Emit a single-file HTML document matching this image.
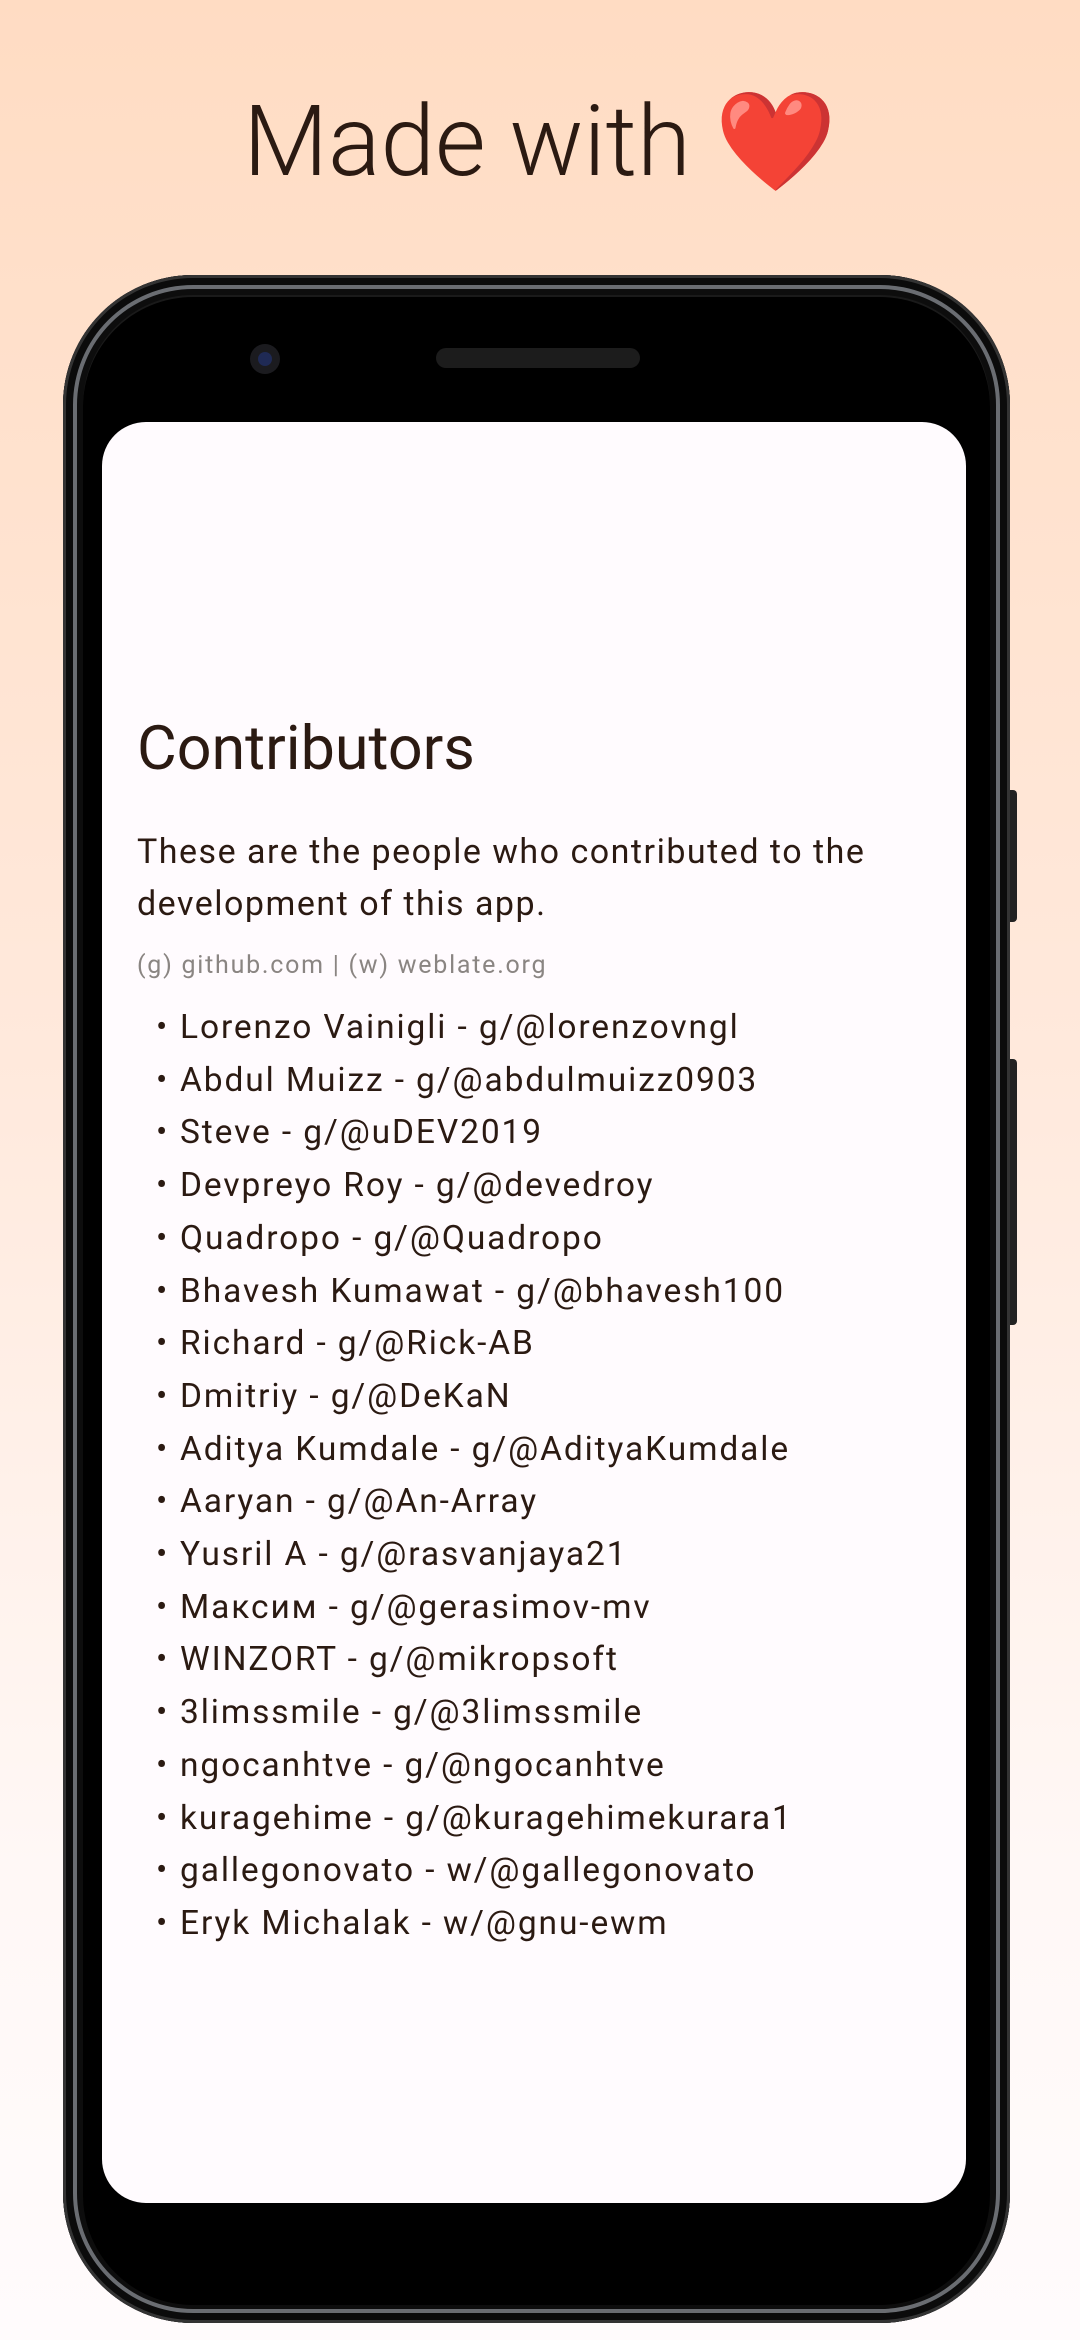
<!DOCTYPE html>
<html><head><meta charset="utf-8"><style>
html,body{margin:0;padding:0}
body{width:1080px;height:2340px;position:relative;overflow:hidden;background:linear-gradient(#ffdcc3 0%,#ffe9dc 45%,#fff8f6 80%,#fffbfc 100%);font-family:"Roboto","Liberation Sans",sans-serif;}
.title{position:absolute;left:0;right:0;top:84px;text-align:center;font-size:98px;font-weight:300;color:#2b1a12;letter-spacing:0px;}
.phone{position:absolute;left:63px;top:275px;width:947px;height:2048px;border-radius:130px;background:#1a1a1a;box-shadow:inset 0 0 0 3px #333,inset 0 0 0 10px #0b0b0b,inset 0 0 0 14px #6a6d72,inset 0 0 0 20px #0d0d0d;}
.inner{position:absolute;left:20px;top:22px;right:20px;bottom:18px;border-radius:110px;background:#000;}
.btn{position:absolute;left:1008px;width:9px;background:#222;border-radius:0 4px 4px 0}
.screen{position:absolute;left:102px;top:422px;width:864px;height:1781px;background:#fffbfe;border-radius:44px;color:#2b1a12;}
.cam{position:absolute;left:250px;top:344px;width:30px;height:30px;border-radius:50%;background:#1b1b1f;}
.cam:after{content:"";position:absolute;left:8px;top:8px;width:14px;height:14px;border-radius:50%;background:#1f2a55;}
.spk{position:absolute;left:436px;top:348px;width:204px;height:20px;border-radius:10px;background:#1c1c1c;}
h1{position:absolute;left:35px;top:290px;margin:0;font-size:61px;font-weight:400;}
.desc{position:absolute;left:35px;top:404px;width:840px;font-size:34px;line-height:52px;letter-spacing:1.5px;}
.small{position:absolute;left:35px;top:529px;font-size:25px;color:#8a8582;letter-spacing:1.75px;}
ul{position:absolute;left:20px;top:580px;margin:0;padding:0;list-style:none;font-size:33.5px;line-height:52.7px;letter-spacing:1.9px;}
li:before{content:"•";display:inline-block;width:24px;margin-left:34px;}
</style></head><body>
<div class="title">Made with ❤️</div>
<div class="btn" style="top:790px;height:132px"></div>
<div class="btn" style="top:1059px;height:266px"></div>
<div class="phone"><div class="inner"></div></div>
<div class="cam"></div><div class="spk"></div>
<div class="screen">
<h1>Contributors</h1>
<div class="desc">These are the people who contributed to the development of this app.</div>
<div class="small">(g) github.com | (w) weblate.org</div>
<ul>
<li>Lorenzo Vainigli - g/@lorenzovngl</li>
<li>Abdul Muizz - g/@abdulmuizz0903</li>
<li>Steve - g/@uDEV2019</li>
<li>Devpreyo Roy - g/@devedroy</li>
<li>Quadropo - g/@Quadropo</li>
<li>Bhavesh Kumawat - g/@bhavesh100</li>
<li>Richard - g/@Rick-AB</li>
<li>Dmitriy - g/@DeKaN</li>
<li>Aditya Kumdale - g/@AdityaKumdale</li>
<li>Aaryan - g/@An-Array</li>
<li>Yusril A - g/@rasvanjaya21</li>
<li>Максим - g/@gerasimov-mv</li>
<li>WINZORT - g/@mikropsoft</li>
<li>3limssmile - g/@3limssmile</li>
<li>ngocanhtve - g/@ngocanhtve</li>
<li>kuragehime - g/@kuragehimekurara1</li>
<li>gallegonovato - w/@gallegonovato</li>
<li>Eryk Michalak - w/@gnu-ewm</li>
</ul>
</div>
</body></html>
